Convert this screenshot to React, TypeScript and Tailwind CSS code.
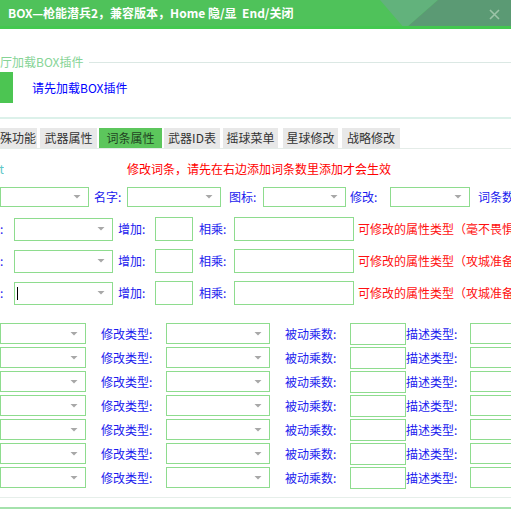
import React from "react";

const Sel = ({ w, h = 20, cursor = false }: { w: string; h?: number; cursor?: boolean }) => (
  <div
    className={`${w} relative shrink-0 border border-[#8edc8e] bg-white flex items-center`}
    style={{ height: h }}
  >
    {cursor && <div className="ml-[2px] w-px h-[13px] bg-black" />}
    <svg className="absolute right-[7px] top-1/2 -translate-y-1/2" width="8" height="5" viewBox="0 0 8 5">
      <path d="M0.5 0.5 L4 4 L7.5 0.5 Z" fill="#a8a8a8" />
    </svg>
  </div>
);

const Inp = ({ w, h = 23 }: { w: string; h?: number }) => (
  <div className={`${w} shrink-0 border border-[#8edc8e] bg-white`} style={{ height: h }} />
);

const Lbl = ({ w, children, cls = "" }: { w: string; children: React.ReactNode; cls?: string }) => (
  <div className={`${w} ${cls} shrink-0 text-[#1a1aee] text-[12px] leading-[16px] whitespace-nowrap`}>{children}</div>
);

export default function App() {
  const tabs = [
    { t: "殊功能", cls: "w-[37px] justify-start" },
    { t: "武器属性", cls: "w-[57px] ml-[3px]" },
    { t: "词条属性", cls: "w-[63px] ml-[2px]", active: true },
    { t: "武器ID表", cls: "w-[56px] ml-[2px]" },
    { t: "摇球菜单", cls: "w-[55px] ml-[3px]" },
    { t: "星球修改", cls: "w-[55px] ml-[5px]" },
    { t: "战略修改", cls: "w-[58px] ml-[4px]" },
  ];
  const reds = ["可修改的属性类型（毫不畏惧", "可修改的属性类型（攻城准备", "可修改的属性类型（攻城准备"];
  return (
    <div className="w-[511px] h-[511px] overflow-hidden bg-white relative font-['Noto_Sans_CJK_SC','Microsoft_YaHei',sans-serif] text-[12px]">
      {/* Title bar */}
      <div className="relative h-[29px] bg-[#4fc25a] border-b-[3px] border-[#43c84f] flex items-center pl-[8px] overflow-hidden">
        <span className="text-white font-bold text-[12px] leading-[16px] whitespace-nowrap relative z-10">
          BOX—枪能潜兵2，兼容版本，Home 隐/显&nbsp;&nbsp;End/关闭
        </span>
        <svg className="absolute left-0 top-0" width="511" height="29" viewBox="0 0 511 29">
          <polygon points="380,0 438,0 405,29" fill="#62b27c" />
          <polygon points="438,0 511,0 511,29 405,29" fill="#5b9a74" />
        </svg>
        <svg className="absolute left-[489px] top-[9px]" width="11" height="11" viewBox="0 0 11 11">
          <path d="M1 1 L10 10 M10 1 L1 10" stroke="#9cc4a8" strokeWidth="1.6" />
        </svg>
      </div>

      {/* Group label */}
      <div className="mt-[25px] flex items-center">
        <span className="text-[#86d496] text-[12px] leading-[16px] whitespace-nowrap">厅加载BOX插件</span>
        <div className="ml-[6px] flex-1 h-px bg-[#dbe8e4]" />
      </div>

      <div className="mt-[2px] flex items-center">
        <div className="w-[13px] h-[31px] bg-[#4cc552]" />
        <span className="ml-[19px] text-[#0000ff] text-[12px] leading-[16px]">请先加载BOX插件</span>
      </div>

      <div className="mt-[14px] h-[2px] bg-[#dcf1ea]" />

      {/* Tabs */}
      <div className="mt-[9px] flex">
        {tabs.map((tb) => (
          <div
            key={tb.t}
            className={`${tb.cls} h-[20px] flex items-center justify-center text-[12px] leading-[16px] whitespace-nowrap ${
              tb.active ? "bg-[#5cc65c] text-[#224422]" : "bg-[#e8e8e8] text-[#333333]"
            }`}
          >
            {tb.t}
          </div>
        ))}
      </div>
      <div className="h-px bg-[#e4ece8]" />

      {/* Red notice */}
      <div className="mt-[12px] flex items-center h-[16px]">
        <div className="w-[4px] overflow-hidden text-[#5cc8c8] leading-[16px] flex justify-end">
          <span className="whitespace-nowrap">t</span>
        </div>
        <span className="ml-[123px] text-[#ff0000] text-[12px] leading-[16px] whitespace-nowrap">
          修改词条，请先在右边添加词条数里添加才会生效
        </span>
      </div>

      {/* Row 1 */}
      <div className="mt-[10px] flex items-center">
        <Sel w="w-[89px]" />
        <Lbl w="w-[33px]" cls="ml-[5px]">名字:</Lbl>
        <Sel w="w-[94px]" />
        <Lbl w="w-[34px]" cls="ml-[8px]">图标:</Lbl>
        <Sel w="w-[83px]" />
        <Lbl w="w-[40px]" cls="ml-[4px]">修改:</Lbl>
        <Sel w="w-[80px]" />
        <Lbl w="w-[60px]" cls="ml-[8px]">词条数</Lbl>
      </div>

      {/* Rows 2-4 */}
      {reds.map((r, i) => (
        <div key={i} className={`${i === 0 ? "mt-[10px]" : "mt-[8px]"} flex items-center`}>
          <Lbl w="w-[14px]">:</Lbl>
          <Sel w="w-[99px]" h={23} cursor={i === 2} />
          <Lbl w="w-[37px]" cls="ml-[5px]">增加:</Lbl>
          <Inp w="w-[38px]" h={24} />
          <Lbl w="w-[35px]" cls="ml-[6px]">相乘:</Lbl>
          <Inp w="w-[120px]" h={24} />
          <span className="ml-[4px] text-[#ff1010] text-[12px] leading-[16px] whitespace-nowrap">{r}</span>
        </div>
      ))}

      {/* Grid rows */}
      <div className="mt-[18px] flex flex-col gap-[3px]">
        {Array.from({ length: 7 }).map((_, i) => (
          <div key={i} className="flex items-center h-[21px]">
            <Sel w="w-[86px]" h={21} />
            <Lbl w="w-[65px]" cls="ml-[15px]">修改类型:</Lbl>
            <Sel w="w-[104px]" h={21} />
            <Lbl w="w-[65px]" cls="ml-[15px]">被动乘数:</Lbl>
            <Inp w="w-[56px]" h={22} />
            <Lbl w="w-[64px]">描述类型:</Lbl>
            <Inp w="w-[60px]" h={21} />
          </div>
        ))}
      </div>

      <div className="mt-[9px] h-px bg-[#e6efea]" />
      <div className="mt-[9px] h-[2px] bg-[#a4e2ac]" />
    </div>
  );
}
